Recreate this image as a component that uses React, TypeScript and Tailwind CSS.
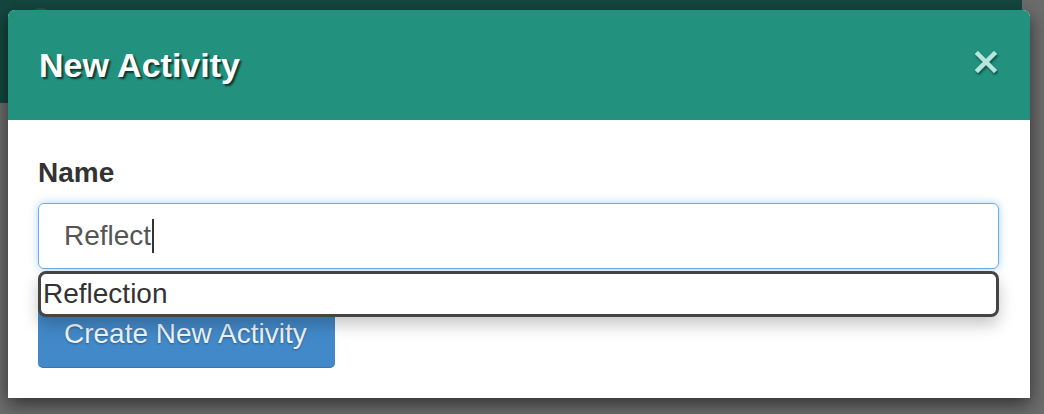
export default function App() {
  return (
    <div className="relative w-[1044px] h-[414px] overflow-hidden bg-[#6c6c6c] font-['Liberation_Sans',Arial,sans-serif]">
      {/* dimmed page behind the modal */}
      <div className="w-[1022px] h-[103px] bg-[#14463f]">
        <div className="ml-[27px] pt-[8px]">
          <div className="w-[28px] h-[28px] rounded-full bg-[#3d4f4b]" />
        </div>
      </div>

      {/* Modal */}
      <div className="absolute left-[8px] top-[10px] w-[1022px] h-[388px] bg-white rounded-t-[7px] shadow-[0_6px_18px_rgba(0,0,0,0.55)]">
        <div className="h-[110px] bg-[#22927f] rounded-t-[7px] flex items-center justify-between pl-[31px] pr-[33px]">
          <h1 className="text-[34px] font-bold text-white leading-none [text-shadow:2px_2px_2px_rgba(0,0,0,0.65)]">
            New Activity
          </h1>
          <svg width="22" height="22" viewBox="0 0 22 22" className="-mt-[6px] drop-shadow-[1px_2px_1px_rgba(0,0,0,0.45)]">
            <path d="M3 3 L19 19 M19 3 L3 19" stroke="#b8e6dd" strokeWidth="4.5" strokeLinecap="square" />
          </svg>
        </div>

        <div className="pl-[30px] pr-[31px] pt-[33px] pb-[30px]">
          <div className="text-[28px] leading-[40px] font-bold text-[#333333] mb-[10px]">Name</div>

          <div className="relative">
            <div className="h-[66px] rounded-[6px] border border-[#66afe9] shadow-[0_0_8px_rgba(102,175,233,0.55)] flex items-center pl-[25px] text-[28px] text-[#555555]">
              <span>Reflect</span>
              <span className="w-[1.5px] h-[34px] bg-[#333] ml-[1px]" />
            </div>

            {/* autocomplete suggestion */}
            <div className="absolute left-0 right-0 top-[68px] z-10 h-[46px] rounded-[8px] border-[3px] border-[#444444] bg-white flex items-center pl-[2px] text-[28px] text-[#333333] shadow-[0_8px_16px_rgba(0,0,0,0.22)]">
              Reflection
            </div>
          </div>

          <button className="mt-[31px] w-[297px] h-[68px] rounded-[5px] bg-[#4289c9] border-b border-[#3676b3] text-left pl-[26px] text-[28px] text-[#eef4fa] [text-shadow:0_1px_2px_rgba(0,0,0,0.35)]">
            Create New Activity
          </button>
        </div>
      </div>
    </div>
  );
}
